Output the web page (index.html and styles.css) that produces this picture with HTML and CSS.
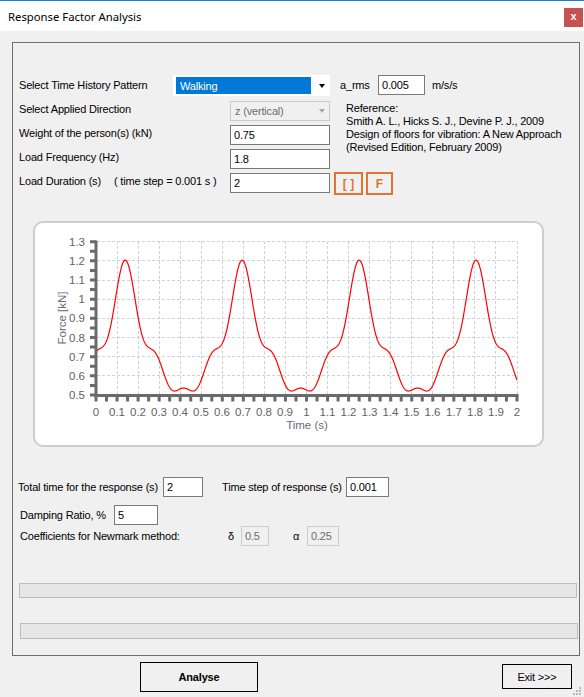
FILE: index.html
```html
<!DOCTYPE html>
<html>
<head>
<meta charset="utf-8">
<title>Response Factor Analysis</title>
<link rel="stylesheet" href="styles.css">
</head>
<body>
<div class="titlebar">
  <span class="title">Response Factor Analysis</span>
  <span class="close">x</span>
</div>
<div class="group">
  <div class="top">
    <div class="lbl c-1 row1">Select Time History Pattern</div>
    <div class="combo main row1">
      <span class="sel">Walking</span>
      <span class="arrow"><span class="tri"></span></span>
    </div>
    <div class="arms row1">
      <span class="arms-lbl">a_rms</span>
      <span class="tb w47">0.005</span>
      <span class="unit">m/s/s</span>
    </div>

    <div class="lbl c-12 row2">Select Applied Direction</div>
    <div class="combo dis row2">
      <span class="distext">z (vertical)</span>
      <span class="arrow"><span class="tri gray"></span></span>
    </div>
    <div class="ref">
      <div>Reference:</div>
      <div>Smith A. L., Hicks S. J., Devine P. J., 2009</div>
      <div>Design of floors for vibration: A New Approach</div>
      <div>(Revised Edition, February 2009)</div>
    </div>

    <div class="lbl c-12 row3">Weight of the person(s) (kN)</div>
    <div class="tb field row3">0.75</div>

    <div class="lbl c-12 row4">Load Frequency (Hz)</div>
    <div class="tb field row4">1.8</div>

    <div class="lbl c-12 row5">Load Duration (s)<span class="step">( time step = 0.001 s )</span></div>
    <div class="tb field row5">2</div>
    <div class="tools row5">
      <span class="ob w29">[ ]</span>
      <span class="ob w27">F</span>
    </div>
  </div>

  <div class="panel">
    <svg class="chart" width="507" height="222" viewBox="35 223 507 222" xmlns="http://www.w3.org/2000/svg">
      <g class="grid">
        <line x1="117.5" y1="241" x2="117.5" y2="395"/>
        <line x1="138.5" y1="241" x2="138.5" y2="395"/>
        <line x1="159.5" y1="241" x2="159.5" y2="395"/>
        <line x1="180.5" y1="241" x2="180.5" y2="395"/>
        <line x1="201.5" y1="241" x2="201.5" y2="395"/>
        <line x1="222.5" y1="241" x2="222.5" y2="395"/>
        <line x1="243.5" y1="241" x2="243.5" y2="395"/>
        <line x1="264.5" y1="241" x2="264.5" y2="395"/>
        <line x1="285.5" y1="241" x2="285.5" y2="395"/>
        <line x1="306.5" y1="241" x2="306.5" y2="395"/>
        <line x1="327.5" y1="241" x2="327.5" y2="395"/>
        <line x1="348.5" y1="241" x2="348.5" y2="395"/>
        <line x1="369.5" y1="241" x2="369.5" y2="395"/>
        <line x1="390.5" y1="241" x2="390.5" y2="395"/>
        <line x1="411.5" y1="241" x2="411.5" y2="395"/>
        <line x1="432.5" y1="241" x2="432.5" y2="395"/>
        <line x1="453.5" y1="241" x2="453.5" y2="395"/>
        <line x1="474.5" y1="241" x2="474.5" y2="395"/>
        <line x1="495.5" y1="241" x2="495.5" y2="395"/>
        <line x1="517.5" y1="241" x2="517.5" y2="395"/>
        <line x1="97" y1="375.5" x2="518" y2="375.5"/>
        <line x1="97" y1="356.5" x2="518" y2="356.5"/>
        <line x1="97" y1="337.5" x2="518" y2="337.5"/>
        <line x1="97" y1="318.5" x2="518" y2="318.5"/>
        <line x1="97" y1="299.5" x2="518" y2="299.5"/>
        <line x1="97" y1="280.5" x2="518" y2="280.5"/>
        <line x1="97" y1="260.5" x2="518" y2="260.5"/>
        <line x1="97" y1="241.5" x2="518" y2="241.5"/>
      </g>
      <polyline id="curve" class="curve" points=""/>
      <path class="axis" d="M96 240.5 V397 M94.5 395.5 H518.5"/>
      <line class="xticks" x1="94.5" y1="398.5" x2="519" y2="398.5"/>
      <line class="yticks" x1="93" y1="396.5" x2="93" y2="239"/>
      <g class="ylab">
        <text x="85" y="245.6">1.3</text>
        <text x="85" y="264.8">1.2</text>
        <text x="85" y="284">1.1</text>
        <text x="85" y="303.2">1</text>
        <text x="85" y="322.3">0.9</text>
        <text x="85" y="341.5">0.8</text>
        <text x="85" y="360.7">0.7</text>
        <text x="85" y="379.8">0.6</text>
        <text x="85" y="399">0.5</text>
      </g>
      <g class="xlab">
        <text x="96" y="416">0</text>
        <text x="117" y="416">0.1</text>
        <text x="138" y="416">0.2</text>
        <text x="159" y="416">0.3</text>
        <text x="180" y="416">0.4</text>
        <text x="201" y="416">0.5</text>
        <text x="222" y="416">0.6</text>
        <text x="243" y="416">0.7</text>
        <text x="264" y="416">0.8</text>
        <text x="285" y="416">0.9</text>
        <text x="306.5" y="416">1</text>
        <text x="327.5" y="416">1.1</text>
        <text x="348.5" y="416">1.2</text>
        <text x="369.5" y="416">1.3</text>
        <text x="390.5" y="416">1.4</text>
        <text x="411.5" y="416">1.5</text>
        <text x="432.5" y="416">1.6</text>
        <text x="454" y="416">1.7</text>
        <text x="475" y="416">1.8</text>
        <text x="496" y="416">1.9</text>
        <text x="517" y="416">2</text>
      </g>
      <text class="atitle" x="307" y="429">Time (s)</text>
      <text class="atitle" transform="translate(66 318) rotate(-90)" x="0" y="0">Force [kN]</text>
    </svg>
  </div>

  <div class="brow rowA">
    <span class="blbl w145">Total time for the response (s)</span>
    <span class="tb w40">2</span>
    <span class="blbl w124 ml19">Time step of response (s)</span>
    <span class="tb w43">0.001</span>
  </div>
  <div class="brow rowB">
    <span class="blbl w94">Damping Ratio, %</span>
    <span class="tb w44">5</span>
  </div>
  <div class="brow rowC">
    <span class="blbl w208">Coefficients for Newmark method:</span>
    <span class="blbl w13">δ</span>
    <span class="tb tbdis w28">0.5</span>
    <span class="blbl w14 ml24">α</span>
    <span class="tb tbdis w32">0.25</span>
  </div>
  <div class="pbar pb1"></div>
  <div class="pbar pb2"></div>
</div>
<div class="buttons">
  <div class="btn analyse">Analyse</div>
  <div class="btn exit">Exit &gt;&gt;&gt;</div>
</div>
<svg class="grip" width="12" height="12" viewBox="0 0 12 12" xmlns="http://www.w3.org/2000/svg">
  <rect x="8" y="2" width="2" height="2"/>
  <rect x="5" y="5" width="2" height="2"/>
  <rect x="8" y="5" width="2" height="2"/>
  <rect x="2" y="8" width="2" height="2"/>
  <rect x="5" y="8" width="2" height="2"/>
  <rect x="8" y="8" width="2" height="2"/>
</svg>
<script src="script.js"></script>
</body>
</html>
```

FILE: styles.css
```css
* { box-sizing: border-box; }
html, body { margin: 0; padding: 0; }
body {
  width: 584px;
  height: 697px;
  overflow: hidden;
  position: relative;
  background: #f0f0f0;
  color: #000;
  font-family: "Liberation Sans", Arial, sans-serif;
  font-size: 11px;
  letter-spacing: -0.18px;
}

/* title bar */
.titlebar {
  height: 31px;
  border-top: 1px solid #1a7dd2;
  background: #fff;
  display: flex;
  align-items: flex-start;
  justify-content: space-between;
}
.title {
  font-family: "Noto Sans", sans-serif;
  font-size: 11.3px;
  letter-spacing: 0;
  line-height: 17px;
  margin: 7px 0 0 8px;
}
.close {
  width: 19px;
  height: 19px;
  margin: 7px 1px 0 0;
  background: #c75050;
  color: #fff;
  font-weight: bold;
  font-size: 11px;
  letter-spacing: 0;
  display: flex;
  align-items: center;
  justify-content: center;
  line-height: 1;
  padding-bottom: 2px;
}

/* group box */
.group {
  width: 568px;
  height: 614px;
  margin: 11px 0 0 12px;
  border: 1px solid #6e6e6e;
}

.top {
  display: grid;
  grid-template-columns: 154px 57px 100px 1fr;
  grid-template-rows: repeat(5, 24px);
  margin: 30px 0 0 6px;
}
.row1 { grid-row: 1; }
.row2 { grid-row: 2; }
.row3 { grid-row: 3; }
.row4 { grid-row: 4; }
.row5 { grid-row: 5; }
.lbl { align-self: center; white-space: nowrap; line-height: 13px; }
.c-1 { grid-column: 1; }
.c-12 { grid-column: 1 / 3; }
.step { margin-left: 13px; }

.tb {
  display: flex;
  align-items: center;
  height: 20px;
  background: #fff;
  border: 1px solid #7a7a7a;
  padding-left: 3px;
  white-space: nowrap;
}
.field { grid-column: 3; align-self: end; }
.tbdis { background: #f0f0f0; border-color: #cccccc; color: #6d6d6d; }

.combo { display: flex; }
.combo.main {
  grid-column: 2 / 4;
  align-self: start;
  margin-top: 2px;
  height: 21px;
  background: #fff;
  border: 1px solid #fff;
  padding: 1px 0 1px 2px;
}
.sel {
  flex: 1;
  background: #0078d7;
  color: #fff;
  padding-left: 4px;
  display: flex;
  align-items: center;
}
.arrow {
  width: 18px;
  display: flex;
  align-items: center;
  justify-content: center;
  padding-left: 3px;
}
.tri {
  width: 0;
  height: 0;
  border-left: 3.5px solid transparent;
  border-right: 3.5px solid transparent;
  border-top: 4px solid #000;
}
.tri.gray { border-top-color: #a6a6a6; }
.combo.dis {
  grid-column: 3;
  align-self: end;
  height: 20px;
  border: 1px solid #cccccc;
  background: #f0f0f0;
  color: #6d6d6d;
}
.distext { flex: 1; padding-left: 4px; display: flex; align-items: center; }
.combo.dis .arrow { width: 17px; }

.arms {
  grid-column: 4;
  display: flex;
  align-items: center;
  align-self: start;
  margin-top: 2px;
  height: 20px;
  padding-left: 10px;
}
.arms-lbl { width: 38px; }
.unit { margin-left: 7px; }
.w47 { width: 47px; }

.ref {
  grid-column: 4;
  grid-row: 2 / 5;
  padding: 5px 0 0 16px;
  line-height: 13px;
  white-space: nowrap;
}

.tools {
  grid-column: 4;
  align-self: start;
  margin-top: 3px;
  display: flex;
  gap: 3px;
  padding-left: 4px;
}
.ob {
  height: 23px;
  border: 2px solid #dd7635;
  color: #dd7635;
  font-weight: bold;
  font-size: 12px;
  letter-spacing: 0;
  display: flex;
  align-items: center;
  justify-content: center;
}
.w29 { width: 29px; }
.w27 { width: 27px; }

/* chart panel */
.panel {
  width: 511px;
  height: 226px;
  margin: 28px 0 0 20px;
  border: 2px solid #cdcdcd;
  border-radius: 10px;
  background: #fff;
  overflow: hidden;
}
.chart { display: block; }
.chart text {
  font-family: "Liberation Sans", Arial, sans-serif;
  font-size: 11.5px;
  letter-spacing: 0;
  fill: #626262;
}
.grid line { stroke: #d2d2d2; stroke-width: 1; stroke-dasharray: 3 2; }
.curve { fill: none; stroke: #ff0000; stroke-width: 1.2; }
.axis { fill: none; stroke: #6a6a6a; stroke-width: 3; }
.xticks { stroke: #6a6a6a; stroke-width: 6; stroke-dasharray: 3 7.525; }
.yticks { stroke: #6a6a6a; stroke-width: 6; stroke-dasharray: 3 6.585; }
.ylab text { text-anchor: end; }
.xlab text { text-anchor: middle; }
.chart .atitle { text-anchor: middle; fill: #6f6a74; }

/* bottom rows */
.brow { display: flex; align-items: center; height: 20px; }
.blbl { white-space: nowrap; }
.rowA { margin: 30px 0 0 5px; }
.rowB { margin: 8px 0 0 7px; }
.rowC { margin: 1px 0 0 7px; }
.w145 { width: 145px; }
.w124 { width: 124px; }
.w94 { width: 94px; }
.w208 { width: 208px; }
.w13 { width: 13px; }
.w14 { width: 14px; }
.w40 { width: 40px; }
.w43 { width: 43px; }
.w44 { width: 44px; }
.w28 { width: 28px; }
.w32 { width: 32px; }
.ml19 { margin-left: 19px; }
.ml24 { margin-left: 24px; }

.pbar {
  width: 558px;
  background: #e6e6e6;
  border: 1px solid #bcbcbc;
}
.pb1 { margin: 37px 0 0 6px; height: 15px; }
.pb2 { margin: 25px 0 0 7px; height: 16px; }

/* dialog buttons */
.buttons { display: flex; align-items: flex-start; margin-top: 6px; }
.btn {
  display: flex;
  align-items: center;
  justify-content: center;
  border: 1px solid #000;
  background: #f0f0f0;
}
.analyse { margin-left: 140px; width: 118px; height: 30px; font-weight: bold; }
.exit { margin-left: 244px; margin-top: 2px; width: 70px; height: 25px; }

.grip { position: absolute; right: 1px; bottom: 0; fill: #b8b8b8; }
```

FILE: script.js
```js
(function () {
  var a = [0.3706, 0.0954, 0.0742, 0.0644];
  var pts = [];
  for (var i = 0; i <= 2000; i += 2) {
    var t = i / 1000;
    var th = 2 * Math.PI * 1.8 * t - Math.PI / 2;
    var s = 1;
    for (var n = 0; n < a.length; n++) {
      s += a[n] * Math.cos((n + 1) * th);
    }
    var v = 0.75 * s;
    var x = 96 + 210.5 * t;
    var y = 395 - (v - 0.5) * 191.7;
    pts.push(x.toFixed(2) + ',' + y.toFixed(2));
  }
  document.getElementById('curve').setAttribute('points', pts.join(' '));
})();
```
